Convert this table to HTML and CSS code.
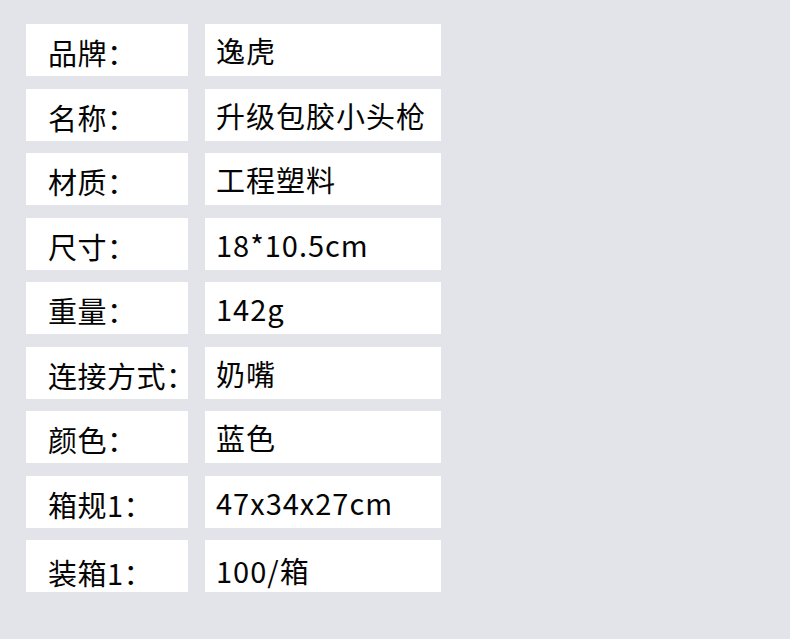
FILE: index.html
```html
<!DOCTYPE html>
<html lang="zh-CN">
<head>
<meta charset="utf-8">
<title>参数</title>
<link rel="stylesheet" href="styles.css">
</head>
<body>
<div class="spec">
  <div class="row"><div class="label">品牌：</div><div class="value">逸虎</div></div>
  <div class="row"><div class="label">名称：</div><div class="value">升级包胶小头枪</div></div>
  <div class="row"><div class="label">材质：</div><div class="value">工程塑料</div></div>
  <div class="row"><div class="label">尺寸：</div><div class="value">18*10.5cm</div></div>
  <div class="row"><div class="label">重量：</div><div class="value">142g</div></div>
  <div class="row"><div class="label">连接方式：</div><div class="value">奶嘴</div></div>
  <div class="row"><div class="label">颜色：</div><div class="value">蓝色</div></div>
  <div class="row"><div class="label">箱规1：</div><div class="value">47x34x27cm</div></div>
  <div class="row row-last"><div class="label">装箱1：</div><div class="value">100/箱</div></div>
</div>
</body>
</html>
```
FILE: styles.css
```css
html, body {
  margin: 0;
  padding: 0;
  background: #e3e4e9;
  width: 790px;
  height: 639px;
  overflow: hidden;
}
.spec {
  padding: 24px 0 0 26px;
  display: flex;
  flex-direction: column;
  gap: 12.5px;
  font-family: "Noto Sans CJK SC", "Noto Sans", sans-serif;
  font-size: 29px;
  letter-spacing: 1px;
  color: #050505;
}
.row {
  display: grid;
  grid-template-columns: 162px 236px;
  column-gap: 17px;
  height: 52px;
}
.label, .value {
  background: #fff;
  line-height: 36px;
  white-space: nowrap;
  min-width: 0;
}
.label {
  padding: 10px 0 0 22px;
  letter-spacing: 0.5px;
}
.value {
  padding: 8px 0 0 11px;
}
.row-last .label {
  padding-top: 14px;
}
.row-last .value {
  padding-top: 12px;
}
```
